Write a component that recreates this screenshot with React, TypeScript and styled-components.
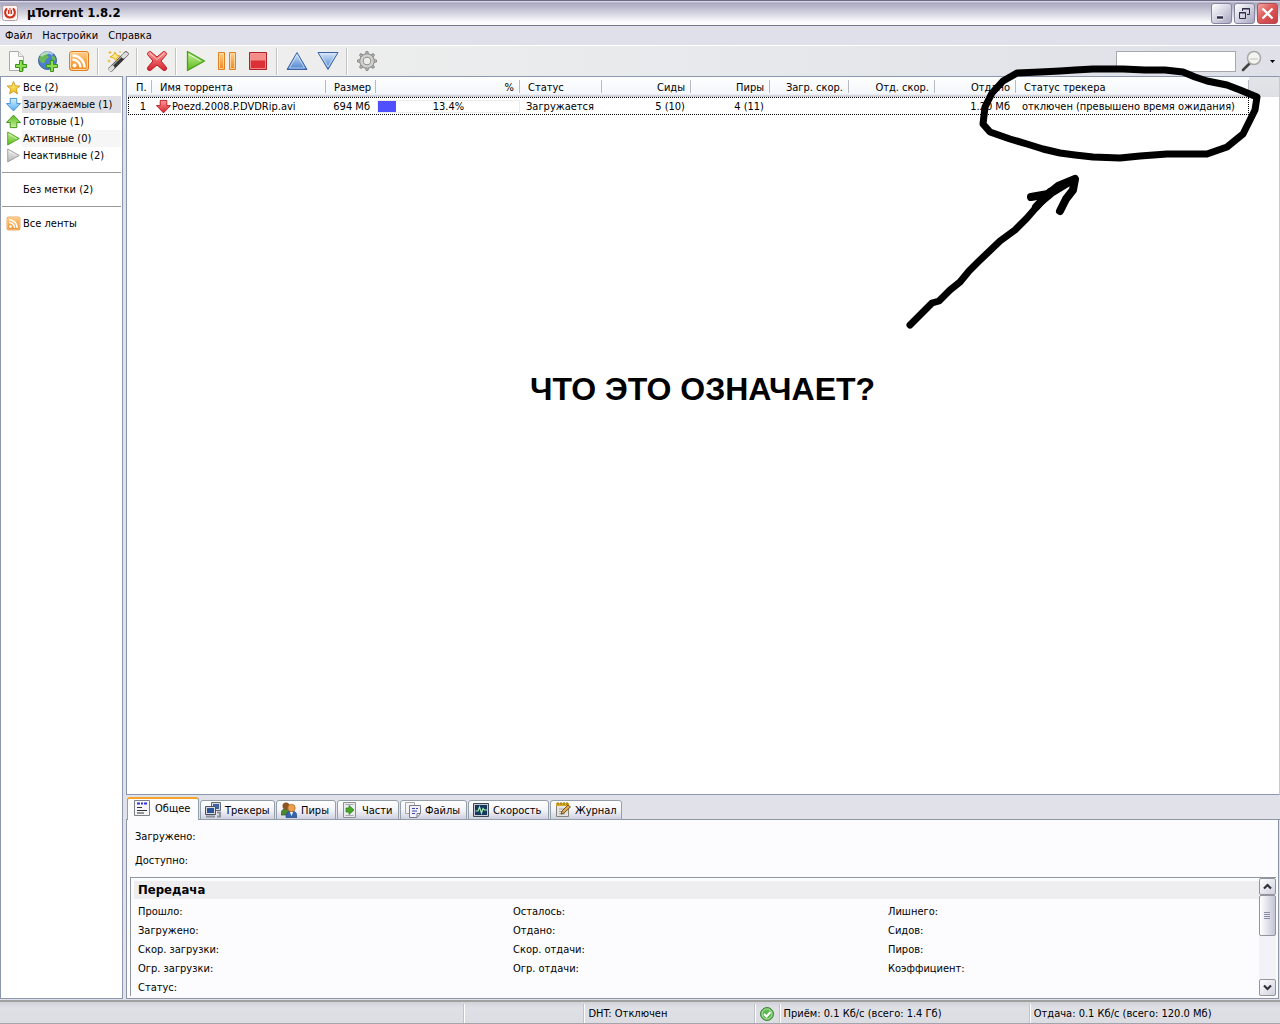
import React from "react";
import styled, { createGlobalStyle } from "styled-components";

const GlobalStyle = createGlobalStyle`
  * { box-sizing: border-box; }
  html, body { margin: 0; padding: 0; }
  body, button, input {
    font-family: "DejaVu Sans Condensed", "DejaVu Sans", sans-serif;
    font-size: 11px;
    line-height: 17px;
    color: #000;
  }
  button { padding: 0; border: 0; background: none; }
  svg { display: block; flex: none; }
`;

const Window = styled.div`
  position: relative;
  display: flex;
  flex-direction: column;
  min-height: 100vh;
  background: #e0e1e9;
  overflow: hidden;
`;

const TitleBar = styled.header`
  display: flex;
  align-items: center;
  gap: 9px;
  height: 26px;
  padding: 0 2px;
  border-top: 1px solid #6b6987;
  border-bottom: 1px solid #74758f;
  background: linear-gradient(#e8e8f0 0, #a9a9c1 2px, #b9b9cc 6px, #dcdce6 14px, #fbfbfd 21px, #fff 24px);
`;

const Title = styled.h1`
  flex: 1;
  margin: 0;
  font: bold 13px/18px "DejaVu Sans Condensed", "DejaVu Sans", sans-serif;
`;

const WindowButtons = styled.div`
  display: flex;
  gap: 2px;
`;

const WindowButton = styled.button<{ $close?: boolean }>`
  display: grid;
  place-items: center;
  width: 21px;
  height: 21px;
  border: 1px solid ${(p) => (p.$close ? "#b0505c" : "#85869f")};
  border-radius: 3px;
  background: ${(p) =>
    p.$close
      ? "linear-gradient(135deg, #f0a8a4, #dc5a58 45%, #c83c40)"
      : "linear-gradient(135deg, #fff, #d4d4e2 50%, #a6a7c0)"};
`;

const MenuBar = styled.nav`
  display: flex;
  gap: 10px;
  height: 20px;
  padding: 0 5px;
  border-bottom: 1px solid #fff;
  background: #e0e0ea;
`;

const MenuItem = styled.button`
  line-height: 19px;
`;

const ToolBar = styled.div`
  display: flex;
  align-items: center;
  height: 30px;
  padding: 0 5px 0 1px;
  background: linear-gradient(90deg, #f1f1ee, #e9eaec 50%, #dfe0e8);
`;

const ToolButton = styled.button`
  display: grid;
  place-items: center;
  width: 31px;
  height: 28px;
`;

const ToolDivider = styled.span`
  width: 2px;
  height: 27px;
  margin: 0 3px;
  border-left: 1px solid #c3c3c6;
  border-right: 1px solid #fff;
`;

const Search = styled.div`
  display: flex;
  align-items: center;
  gap: 5px;
  margin-left: auto;
`;

const SearchBox = styled.input`
  width: 120px;
  height: 21px;
  padding: 0 4px;
  border: 1px solid #a5a8b0;
  background: #fff;
`;

const SearchButton = styled.button`
  display: flex;
  align-items: center;
  gap: 7px;
`;

const Body = styled.div`
  display: flex;
  flex: 1;
  gap: 3px;
  padding-bottom: 1px;
`;

const SidePanel = styled.aside`
  width: 123px;
  padding: 2px 1px 0;
  border: 1px solid #8a97ae;
  background: #fff;
`;

const SideItem = styled.button<{ $bg?: string }>`
  display: flex;
  align-items: center;
  width: 100%;
  height: 17px;
  padding-left: 4px;
  text-align: left;
  span {
    flex: 1;
    margin-left: 1px;
    padding-left: 1px;
    background: ${(p) => p.$bg || "none"};
  }
`;

const IconSlot = styled.i`
  width: 15px;
  height: 16px;
`;

const SideDivider = styled.hr`
  height: 1px;
  margin: 8px 0;
  border: 0;
  background: #9a9a9a;
`;

const Content = styled.main`
  display: flex;
  flex: 1;
  flex-direction: column;
  min-width: 0;
`;

const ListPanel = styled.section`
  display: flex;
  align-items: flex-start;
  flex: 1;
  padding-left: 1px;
  border: 1px solid #8a97ae;
  border-right-color: #c5cad4;
  background: #fff;
`;

const headFill = "linear-gradient(#fdfeff, #f4f7fb 17px, #dcdde4 18px, #c4c5ce 20px)";

const Table = styled.table`
  width: 1121px;
  flex: none;
  table-layout: fixed;
  border-collapse: collapse;
`;

const HeadFiller = styled.div`
  flex: 1;
  height: 20px;
  background: linear-gradient(#e4e5e9, #dedfe4);
`;

const HeadCell = styled.th<{ $right?: boolean }>`
  height: 20px;
  padding: 2px 6px 1px 8px;
  font-weight: normal;
  white-space: nowrap;
  text-align: ${(p) => (p.$right ? "right" : "left")};
  background:
    linear-gradient(#b8bac4, #b8bac4) right 3px / 1px 13px no-repeat,
    ${headFill};
`;

const Row = styled.tr`
  outline: 1px dotted #000;
  outline-offset: -1px;
`;

const Cell = styled.td<{ $right?: boolean }>`
  height: 18px;
  padding: 0 6px 0 6px;
  white-space: nowrap;
  text-align: ${(p) => (p.$right ? "right" : "left")};
`;

const NameCell = styled(Cell)`
  padding-left: 4px;
`;

const NameLine = styled.span`
  display: flex;
  align-items: center;
  gap: 1px;
`;

const ProgressCell = styled.td`
  padding: 0 0 0 1px;
`;

const Progress = styled.div<{ $value: number }>`
  height: 13px;
  border: 1px solid #ececec;
  text-align: center;
  line-height: 11px;
  background: linear-gradient(#5050ff, #5050ff) left / ${(p) => p.$value}% 100% no-repeat border-box;
`;

const Tabs = styled.div`
  display: flex;
  align-items: flex-end;
  gap: 1px;
  height: 25px;
  padding-left: 1px;
  background: linear-gradient(#8d95a5, #8d95a5) bottom / 100% 1px no-repeat;
`;

const Tab = styled.button<{ $active?: boolean; $w: number }>`
  display: flex;
  align-items: center;
  gap: ${(p) => (p.$active ? 5 : 4)}px;
  width: ${(p) => p.$w}px;
  height: ${(p) => (p.$active ? 23 : 20)}px;
  padding: 0 0 ${(p) => (p.$active ? 3 : 0)}px ${(p) => (p.$active ? 6 : 4)}px;
  border: 1px solid #93a0aa;
  border-top: ${(p) => (p.$active ? "2px solid #f7a528" : "1px solid #93a0aa")};
  border-bottom: ${(p) => (p.$active ? "0" : "1px solid #93a0aa")};
  border-radius: 3px 3px 0 0;
  background: ${(p) => (p.$active ? "#fcfcfe" : "linear-gradient(#fff, #f4f4f9 50%, #cfd0e0)")};
  white-space: nowrap;
`;

const TabPage = styled.section`
  display: flex;
  flex-direction: column;
  height: 179px;
  margin-right: 1px;
  padding: 8px 2px 0 3px;
  border: 1px solid #8d95a5;
  border-top: 0;
  background: #fcfcfe;
`;

const Summary = styled.div`
  display: grid;
  gap: 7px;
  padding: 0 5px 8px;
`;

const InfoBox = styled.div`
  display: flex;
  flex: 1;
  min-height: 0;
  margin-bottom: 2px;
  border-top: 1px solid #8f959f;
  border-left: 1px solid #8f959f;
`;

const InfoArea = styled.div`
  flex: 1;
  padding: 3px 0 0 3px;
  overflow: hidden;
`;

const InfoTitle = styled.h2`
  margin: 0 0 3px;
  padding-left: 4px;
  font: bold 13px/18px "DejaVu Sans Condensed", "DejaVu Sans", sans-serif;
  background: #eeeef0;
`;

const InfoGrid = styled.dl`
  display: grid;
  grid-template-columns: repeat(3, 1fr);
  margin: 0 -4px 0 0;
  padding-left: 4px;
`;

const InfoTerm = styled.dt`
  height: 19px;
  line-height: 19px;
`;

const ScrollBar = styled.div`
  display: flex;
  flex-direction: column;
  width: 17px;
  background: #f2f2f7;
`;

const ScrollButton = styled.button`
  display: grid;
  place-items: center;
  height: 17px;
  border: 1px solid #93949f;
  border-radius: 2px;
  background: linear-gradient(135deg, #fff, #cfd0de);
`;

const ScrollThumb = styled.div`
  display: grid;
  place-items: center;
  height: 41px;
  margin-bottom: auto;
  border: 1px solid #93949f;
  border-radius: 2px;
  background: linear-gradient(90deg, #fff, #dcdce8 60%, #c4c5d6);
`;

const StatusBar = styled.footer`
  display: grid;
  grid-template-columns: 464fr 120fr 170fr 25px 250fr 250fr;
  height: 24px;
  padding-top: 2px;
  border-top: 2px solid #a0a19c;
  border-bottom: 1px solid #a4a4ac;
  background: linear-gradient(#d2d3da, #dfe0e6 6px, #dcdde3);
`;

const StatusPart = styled.div`
  display: flex;
  align-items: center;
  padding-left: 3px;
  white-space: nowrap;
  & + & {
    border-left: 1px solid #fff;
    box-shadow: -1px 0 #c2c3ca;
  }
`;

const Annotation = styled.div`
  position: absolute;
  inset: 0;
  pointer-events: none;
  svg { position: absolute; top: 0; left: 0; }
`;

const Question = styled.p`
  position: absolute;
  top: 370px;
  left: 530px;
  margin: 0;
  font: bold 32px/38px "Liberation Sans", Arial, sans-serif;
  white-space: nowrap;
`;

const GradientDefs = styled.svg`
  position: absolute;
`;

const Gradients = () => (
  <GradientDefs width="0" height="0" aria-hidden="true">
    <defs>
      {[
        ["gGreen", "#c8f29a", "#5cb81c"],
        ["gRed", "#ff9a94", "#d4202c"],
        ["gBlue", "#d4e6fa", "#4a80cc"],
        ["gSky", "#d4f0ff", "#58aef4"],
        ["gOrange", "#ffd08a", "#f08418"],
        ["gGrey", "#f2f2f2", "#b4b4b4"],
        ["gYellow", "#fff48a", "#eebc18"],
      ].map(([id, a, b]) => (
        <linearGradient key={id} id={id} x1="0" y1="0" x2="0" y2="1">
          <stop offset="0" stopColor={a} />
          <stop offset="1" stopColor={b} />
        </linearGradient>
      ))}
    </defs>
  </GradientDefs>
);

type IconProps = { size?: number; box?: number; children: React.ReactNode };
const Icon = ({ size = 22, box = 22, children }: IconProps) => (
  <svg width={size} height={size} viewBox={`0 0 ${box} ${box}`} fill="none" aria-hidden="true">
    {children}
  </svg>
);

const PlusMark = () => (
  <path d="M13.500 10.500h3v4h4v3h-4v4h-3v-4h-4v-3h4z" fill="#8edc50" stroke="#38941c" />
);

const AddFileIcon = () => (
  <Icon>
    <path d="M3.500 1.500h9l5 5v14h-14z" fill="#fcfcfc" stroke="#a8aaa6" />
    <path d="M12.500 1.500v5h5" fill="#eee" stroke="#b8bab6" />
    <PlusMark />
  </Icon>
);

const AddUrlIcon = () => (
  <Icon>
    <circle cx="10.500" cy="10.500" r="9" fill="#4a7ed0" stroke="#3a5e9c" />
    <path d="M3 6c2-4 7-4.500 9-3.500l-2 3 2 2-3 2-2 4-3-1-2-3zM14 5l4 2 .5 4-3-1z" fill="#6cb858" />
    <path d="M4 6c2-3 8-5 12-2" stroke="#e4f2ff" strokeWidth="3" opacity=".6" />
    <PlusMark />
  </Icon>
);

const RssIcon = ({ size = 22 }: { size?: number }) => (
  <Icon size={size}>
    <rect x="1.500" y="1.500" width="19" height="19" rx="2.500" fill="url(#gOrange)" stroke="#e07c20" />
    <rect x="2.500" y="2.500" width="17" height="17" rx="2" stroke="#ffdcae" />
    <circle cx="6.500" cy="15.500" r="2" fill="#fff" />
    <path d="M4.500 9.500a8 8 0 0 1 8 8M4.500 5.500a12 12 0 0 1 12 12" stroke="#fff" strokeWidth="2.500" />
  </Icon>
);

const WandIcon = () => (
  <Icon>
    <path d="M4 19 19 4" stroke="#333" strokeWidth="5" strokeLinecap="round" />
    <path d="M3.500 17.500 17 4" stroke="#999" strokeWidth="1.500" />
    <path d="m3.500 19.500 2-2M16.500 6.500 19 4" stroke="#ddd" strokeWidth="4" strokeLinecap="round" />
    <path d="m8 2 1.500 3L13 6l-3 1.500L9 11 7 8 3 7l3.500-2z" fill="#ffe888" stroke="#e0b020" />
    <path d="M3 1v3M1.500 2.500h3M13 1v2M2 9.500v3M.5 11h3" stroke="#e8b830" />
  </Icon>
);

const DeleteIcon = () => (
  <Icon>
    <path
      d="M4.500 1.500 11 7l6.500-5.500c1.500-.5 3.500 1.500 3 3L15 11l5.500 6.500c.5 2-1 3.500-3 3L11 15l-6.500 5.500c-2 .5-3.500-1-3-3L7 11 1.500 4.500c-.5-1.500 1.500-3.500 3-3z"
      fill="url(#gRed)"
      stroke="#b81c28"
    />
    <path d="M4 3.500 11 9.500l7-6" stroke="#ffc8c4" />
  </Icon>
);

const StartIcon = ({ size = 22, grey }: { size?: number; grey?: boolean }) => (
  <Icon size={size}>
    <path d="M2.500 1.500 19.500 11l-17 9.500z" fill={grey ? "url(#gGrey)" : "url(#gGreen)"} stroke={grey ? "#989898" : "#48a018"} strokeWidth="1.300" strokeLinejoin="round" />
    <path d="M4 4.500 15.500 11" stroke="#fff" opacity=".7" />
  </Icon>
);

const PauseIcon = () => (
  <Icon>
    <path d="M2.500 2.500h6v17h-6zM13.500 2.500h6v17h-6z" fill="url(#gOrange)" stroke="#e08020" />
    <path d="M3.500 3.500h4v15h-4zM14.500 3.500h4v15h-4z" stroke="#ffe0b0" opacity=".8" />
  </Icon>
);

const StopIcon = () => (
  <Icon>
    <path d="M2.500 2.500h17v17h-17z" fill="#dc3038" stroke="#b02028" />
    <path d="M3.500 3.500h15v7h-15z" fill="#f48c88" />
    <path d="M3.500 3.500h15v15h-15z" stroke="#f8aca8" opacity=".7" />
  </Icon>
);

const UpIcon = () => (
  <Icon>
    <path d="M11 2.500 21 19.500H1z" fill="url(#gBlue)" stroke="#3c64a4" strokeLinejoin="round" />
    <path d="M11 5 18.500 18h-15z" stroke="#d8e8fa" opacity=".7" />
  </Icon>
);

const DownIcon = () => (
  <Icon>
    <path d="M1 2.500h20L11 19.500z" fill="url(#gBlue)" stroke="#3c64a4" strokeLinejoin="round" />
    <path d="M3.500 4h15L11 17z" stroke="#d8e8fa" opacity=".7" />
  </Icon>
);

const GearIcon = () => (
  <Icon>
    {[0, 45, 90, 135, 180, 225, 270, 315].map((a) => (
      <path key={a} d="M9.500 5 10 1.500h2l.5 3.500z" fill="#c4c4c2" stroke="#8a8a88" transform={`rotate(${a} 11 11)`} />
    ))}
    <circle cx="11" cy="11" r="5.500" stroke="#8e8e8c" strokeWidth="4.500" />
    <circle cx="11" cy="11" r="5.500" stroke="#d0d0ce" strokeWidth="2.600" />
  </Icon>
);

const StarIcon = () => (
  <Icon size={15} box={16}>
    <path d="m8 1.500 1.800 4.700 5 .3-3.900 3.200 1.300 5L8 12l-4.200 2.700 1.300-5-3.900-3.200 5-.3z" fill="url(#gYellow)" stroke="#d0981c" />
  </Icon>
);

const ArrowIcon = ({ fill, stroke, up }: { fill: string; stroke: string; up?: boolean }) => (
  <Icon size={15} box={16}>
    <path
      d="M4.500 1.500h7v5.500h4L8 14.800.5 7h4z"
      fill={`url(#${fill})`}
      stroke={stroke}
      strokeLinejoin="round"
      transform={up ? "rotate(180 8 8)" : undefined}
    />
  </Icon>
);

const LogoIcon = () => (
  <Icon size={16} box={16}>
    <rect x=".5" y=".5" width="15" height="15" rx="2" fill="#fff4f0" stroke="#b8a0a8" />
    <path d="M4.500 4C2 7 3 12.500 8 12.500S14 7 11.500 4" stroke="#d03020" strokeWidth="2" strokeLinecap="round" />
    <path d="M6.500 5v4M9.500 5v4M8 3v6" stroke="#d03020" />
  </Icon>
);

const SearchIcon = () => (
  <Icon>
    <path d="m2 20 7-7" stroke="#444" strokeWidth="2.600" strokeLinecap="round" />
    <circle cx="13" cy="8" r="6.500" fill="#f4f4f2" stroke="#a8a8a4" strokeWidth="1.500" />
    <path d="M9 8h8v2H9z" fill="#dadad6" />
  </Icon>
);

const GeneralIcon = () => (
  <Icon size={16} box={16}>
    <path d="M.5.5h15v15H.5z" fill="#f6f6f8" stroke="#7c8088" />
    <path d="M3 3.500h3M7 3.500h2M10 3.500h3" stroke="#3434d8" strokeWidth="2" />
    <path d="M3 7.500h5M3 10.500h10M3 13h7" stroke="#333" />
  </Icon>
);

const TrackersIcon = () => (
  <Icon size={16} box={16}>
    <path d="M6.500.5h9v8h-9z" fill="#dcdce0" stroke="#666a74" />
    <path d="M8 2h6v5H8z" fill="#3c64a8" />
    <path d="M.5 4.500h10v8H.5z" fill="#dcdce0" stroke="#4c5464" />
    <path d="M2 6h7v5H2z" fill="#2c5498" />
    <path d="M1 14.500h9M12 10.500h3v4h-3" stroke="#8c9098" strokeWidth="2" />
  </Icon>
);

const PeersIcon = () => (
  <Icon size={16} box={16}>
    <path d="M0 13c0-5 2-6 4.500-6S9 9 9 13z" fill="#4c8830" stroke="#345c20" strokeWidth=".7" />
    <circle cx="5" cy="4" r="3.500" fill="#8c5420" />
    <path d="M5 15.500c0-5 2-6.500 5.500-6.500s5.500 1.500 5.500 6.500z" fill="#3464ac" stroke="#24447c" strokeWidth=".7" />
    <circle cx="10.500" cy="6" r="3.700" fill="#eca050" stroke="#a86420" strokeWidth=".7" />
    <path d="m9 10 1.500 4 1.500-4z" fill="#fff" />
  </Icon>
);

const PiecesIcon = () => (
  <Icon size={16} box={16}>
    <path d="M1.500.5h12v15h-12z" fill="#e8eaec" stroke="#8c9094" />
    <path d="M3.500 2.500h8M3.500 13.500h8" stroke="#a8acb0" />
    <path d="M4 6h3V3.500L12 8l-5 4.500V10H4z" fill="#48a828" stroke="#287818" strokeWidth=".7" />
  </Icon>
);

const FilesIcon = () => (
  <Icon size={16} box={16}>
    <path d="M.5.5h9v11h-9z" fill="#f4f4f4" stroke="#a8a8a8" />
    <path d="M4.500 3.500h11v8l-3.500 4H4.500z" fill="#f0f0f8" stroke="#7c7c88" />
    <path d="M7 6.500h3M11 6.500h2M7 9h5M7 11.500h3" stroke="#4444b0" />
    <path d="M12 15v-3.500h3.500" stroke="#7c7c88" />
  </Icon>
);

const SpeedIcon = () => (
  <Icon size={16} box={16}>
    <path d="M.5 1.500h15v13H.5z" fill="#c8ccd4" stroke="#3c4858" />
    <path d="M2 3h12v10H2z" fill="#16385c" />
    <path d="M2.500 9H5l1.500-4 2 6L10 6.500 11.500 8H14" stroke="#a4ecb4" strokeWidth="1.200" />
  </Icon>
);

const LogIcon = () => (
  <Icon size={16} box={16}>
    <path d="M1.500 2.500h12v12h-12z" fill="#e4e4e0" stroke="#84847c" />
    <path d="M1 1h13v3H1z" fill="#dcac24" />
    <path d="M3 0v3M6 0v3M9 0v3M12 0v3" stroke="#8c6c14" />
    <path d="M4 7h5M4 9.500h3M4 12h6" stroke="#a4a4a0" />
    <path d="m6 12 1-3 6-6 2.500 2-6.500 6z" fill="#e0a850" stroke="#543814" strokeWidth=".8" />
  </Icon>
);

const CheckIcon = () => (
  <Icon size={16} box={16}>
    <circle cx="8" cy="8" r="6.500" fill="#5cb850" stroke="#3c8838" />
    <circle cx="8" cy="8" r="5" stroke="#b4e0a8" />
    <path d="m5 8 2.500 2.500L11.500 6" stroke="#fff" strokeWidth="2" />
  </Icon>
);

const Chevron = ({ up }: { up?: boolean }) => (
  <Icon size={9} box={9}>
    <path d={up ? "m1 6.500 3.500-3.500L8 6.500" : "m1 2.500 3.500 3.500L8 2.500"} stroke="#30323c" strokeWidth="2.200" />
  </Icon>
);

const toolGroups: { label: string; icon: React.ReactNode }[][] = [
  [
    { label: "Добавить торрент", icon: <AddFileIcon /> },
    { label: "Добавить по ссылке", icon: <AddUrlIcon /> },
    { label: "Добавить ленту", icon: <RssIcon /> },
  ],
  [{ label: "Создать торрент", icon: <WandIcon /> }],
  [{ label: "Удалить", icon: <DeleteIcon /> }],
  [
    { label: "Запустить", icon: <StartIcon /> },
    { label: "Приостановить", icon: <PauseIcon /> },
    { label: "Остановить", icon: <StopIcon /> },
  ],
  [
    { label: "Вверх", icon: <UpIcon /> },
    { label: "Вниз", icon: <DownIcon /> },
  ],
  [{ label: "Конфигурация", icon: <GearIcon /> }],
];

const filters = [
  { text: "Все (2)", icon: <StarIcon /> },
  { text: "Загружаемые (1)", icon: <ArrowIcon fill="gSky" stroke="#3c8cd4" />, bg: "#dfdfe4" },
  { text: "Готовые (1)", icon: <ArrowIcon fill="gGreen" stroke="#3c9018" up /> },
  { text: "Активные (0)", icon: <StartIcon size={15} />, bg: "#f6f6f6" },
  { text: "Неактивные (2)", icon: <StartIcon size={15} grey /> },
];

const columns: { text: string; width: number; right?: boolean }[] = [
  { text: "П.", width: 24, right: true },
  { text: "Имя торрента", width: 174 },
  { text: "Размер", width: 50, right: true },
  { text: "%", width: 144, right: true },
  { text: "Статус", width: 82 },
  { text: "Сиды", width: 89, right: true },
  { text: "Пиры", width: 79, right: true },
  { text: "Загр. скор.", width: 79, right: true },
  { text: "Отд. скор.", width: 86, right: true },
  { text: "Отдано", width: 81, right: true },
  { text: "Статус трекера", width: 233 },
];

const tabs = [
  { text: "Общее", icon: <GeneralIcon />, width: 72 },
  { text: "Трекеры", icon: <TrackersIcon />, width: 75 },
  { text: "Пиры", icon: <PeersIcon />, width: 60 },
  { text: "Части", icon: <PiecesIcon />, width: 62 },
  { text: "Файлы", icon: <FilesIcon />, width: 67 },
  { text: "Скорость", icon: <SpeedIcon />, width: 81 },
  { text: "Журнал", icon: <LogIcon />, width: 72 },
];

const info = [
  "Прошло:", "Осталось:", "Лишнего:",
  "Загружено:", "Отдано:", "Сидов:",
  "Скор. загрузки:", "Скор. отдачи:", "Пиров:",
  "Огр. загрузки:", "Огр. отдачи:", "Коэффициент:",
  "Статус:",
];

export default function App() {
  return (
    <Window>
      <GlobalStyle />
      <Gradients />
      <TitleBar>
        <LogoIcon />
        <Title>µTorrent 1.8.2</Title>
        <WindowButtons>
          <WindowButton aria-label="Свернуть">
            <Icon size={15} box={15}><path d="M3 11.500h6" stroke="#fff" strokeWidth="4" /><path d="M3 11.500h6" stroke="#2c2c48" strokeWidth="2.500" /></Icon>
          </WindowButton>
          <WindowButton aria-label="Восстановить">
            <Icon size={15} box={15}><path d="M5.500 5V2.500h7v6H10M5 3h8M2.500 6.500h6v6h-6zM2 7h7" stroke="#2c2c48" /></Icon>
          </WindowButton>
          <WindowButton $close aria-label="Закрыть">
            <Icon size={15} box={15}><path d="m2.500 2.500 10 10m0-10-10 10" stroke="#fff" strokeWidth="2.400" /></Icon>
          </WindowButton>
        </WindowButtons>
      </TitleBar>
      <MenuBar>
        <MenuItem>Файл</MenuItem>
        <MenuItem>Настройки</MenuItem>
        <MenuItem>Справка</MenuItem>
      </MenuBar>
      <ToolBar>
        {toolGroups.map((group, i) => (
          <React.Fragment key={i}>
            {i > 0 && <ToolDivider />}
            {group.map((t) => (
              <ToolButton key={t.label} aria-label={t.label}>{t.icon}</ToolButton>
            ))}
          </React.Fragment>
        ))}
        <Search>
          <SearchBox aria-label="Поиск" />
          <SearchButton aria-label="Искать">
            <SearchIcon />
            <svg width="5" height="3" viewBox="0 0 5 3"><path d="M0 0h5L2.500 3z" fill="#000" /></svg>
          </SearchButton>
        </Search>
      </ToolBar>

      <Body>
        <SidePanel>
          {filters.map((f) => (
            <SideItem key={f.text} $bg={f.bg}>{f.icon}<span>{f.text}</span></SideItem>
          ))}
          <SideDivider />
          <SideItem><IconSlot /><span>Без метки (2)</span></SideItem>
          <SideDivider />
          <SideItem><RssIcon size={15} /><span>Все ленты</span></SideItem>
        </SidePanel>

        <Content>
          <ListPanel>
            <Table>
              <colgroup>
                {columns.map((c) => <col key={c.text} width={c.width} />)}
              </colgroup>
              <thead>
                <tr>
                  {columns.map((c) => <HeadCell key={c.text} $right={c.right}>{c.text}</HeadCell>)}
                </tr>
              </thead>
              <tbody>
                <Row>
                  <Cell $right>1</Cell>
                  <NameCell>
                    <NameLine><ArrowIcon fill="gRed" stroke="#b81c24" />Poezd.2008.P.DVDRip.avi</NameLine>
                  </NameCell>
                  <Cell $right>694 Мб</Cell>
                  <ProgressCell><Progress $value={13.4}>13.4%</Progress></ProgressCell>
                  <Cell>Загружается</Cell>
                  <Cell $right>5 (10)</Cell>
                  <Cell $right>4 (11)</Cell>
                  <Cell />
                  <Cell />
                  <Cell $right>1.20 Мб</Cell>
                  <Cell>отключен (превышено время ожидания)</Cell>
                </Row>
              </tbody>
            </Table>
            <HeadFiller />
          </ListPanel>

          <Tabs role="tablist">
            {tabs.map((t, i) => (
              <Tab key={t.text} role="tab" aria-selected={i === 0} $active={i === 0} $w={t.width}>
                {t.icon}{t.text}
              </Tab>
            ))}
          </Tabs>
          <TabPage>
            <Summary>
              <span>Загружено:</span>
              <span>Доступно:</span>
            </Summary>
            <InfoBox>
              <InfoArea>
                <InfoTitle>Передача</InfoTitle>
                <InfoGrid>
                  {info.map((t) => <InfoTerm key={t}>{t}</InfoTerm>)}
                </InfoGrid>
              </InfoArea>
              <ScrollBar>
                <ScrollButton aria-label="Прокрутить вверх"><Chevron up /></ScrollButton>
                <ScrollThumb>
                  <svg width="7" height="8" viewBox="0 0 7 8"><path d="M0 .5h6M0 2.500h6M0 4.500h6M0 6.500h6" stroke="#8c8ea4" /></svg>
                </ScrollThumb>
                <ScrollButton aria-label="Прокрутить вниз"><Chevron /></ScrollButton>
              </ScrollBar>
            </InfoBox>
          </TabPage>
        </Content>
      </Body>

      <StatusBar>
        <StatusPart />
        <StatusPart />
        <StatusPart>DHT: Отключен</StatusPart>
        <StatusPart><CheckIcon /></StatusPart>
        <StatusPart>Приём: 0.1 Кб/с (всего: 1.4 Гб)</StatusPart>
        <StatusPart>Отдача: 0.1 Кб/с (всего: 120.0 Мб)</StatusPart>
      </StatusBar>

      <Annotation>
        <svg width="1280" height="400" viewBox="0 0 1280 400" fill="none" stroke="#000" strokeWidth="8" strokeLinecap="round" strokeLinejoin="round" aria-hidden="true">
          <path d="M1017 73 1040 72 1060 71 1075 70 1093 69 1123 69 1145 70 1165 70 1183 72 1195 77 1207 81 1227 85 1240 90 1257 97 1255 110 1249 122 1243 134 1227 147 1207 154 1167 154 1140 156 1120 158 1093 157 1075 155 1060 153 1043 149 1027 144 1010 139 990 132 983 124 985 107 992 93 1003 81z" strokeWidth="7" />
          <path d="M910 325 922 313 932 303 939 301 950 290 960 282 969 271 978 262 1000 241 1015 230 1027 218 1040 203 1052 193 1075 179" strokeWidth="7" />
          <path d="M1031 197 1048 194 1058 186 1075 179 1073 190 1066 199 1060 211" />
          <path d="M1036 207 1050 192" />
        </svg>
        <Question>ЧТО ЭТО ОЗНАЧАЕТ?</Question>
      </Annotation>
    </Window>
  );
}
